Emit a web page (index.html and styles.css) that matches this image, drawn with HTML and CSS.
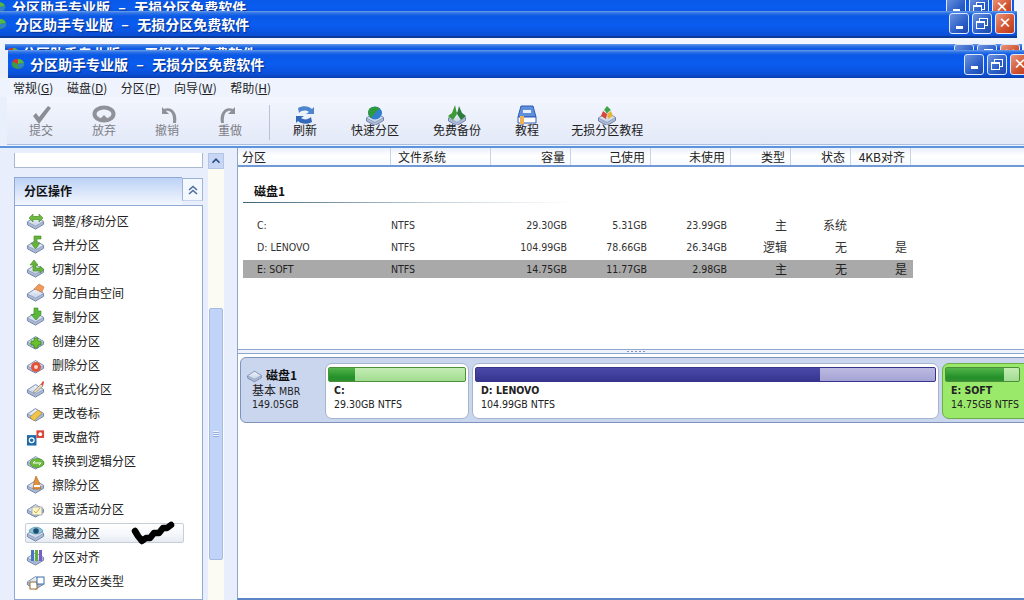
FILE: index.html
```html
<!DOCTYPE html>
<html lang="zh-CN">
<head>
<meta charset="utf-8">
<title>分区助手专业版</title>
<link rel="stylesheet" href="styles.css">
</head>
<body>
<svg class="defs" width="0" height="0" aria-hidden="true">
  <defs>
    <linearGradient id="gd" x1="0" y1="0" x2="0" y2="1"><stop offset="0" stop-color="#f4f7fc"/><stop offset="1" stop-color="#c3cfe4"/></linearGradient>
    <symbol id="disk" viewBox="0 0 20 20">
      <path d="M1.5 11 10 5.500 18.500 10.500V13.500L10 18.500 1.500 14Z" fill="#aebcd6" stroke="#6d80a8"/>
      <path d="M1.500 11 10 5.500 18.500 10.500 10 15.500Z" fill="url(#gd)" stroke="#7c8fb4" stroke-width=".7"/>
    </symbol>
    <symbol id="logo" viewBox="0 0 20 20">
      <ellipse cx="10" cy="10" rx="9" ry="7" fill="#3c9a4a"/>
      <path d="M10 10 2 6.500C4 3 7 3 10 3Z" fill="#d5352c"/>
      <path d="M10 10 10 3C14 3 17 5 18 8Z" fill="#53b648"/>
      <path d="M10 10 18 9C19 13 15 16 11 16Z" fill="#2f7fd8"/>
    </symbol>
  </defs>
</svg>

<div class="win win-a">
  <div class="titlebar">
    <svg class="logo"><use href="#logo"/></svg>
    <span class="title">分区助手专业版 &nbsp;–&nbsp; 无损分区免费软件</span>
    <div class="controls"><span class="ctl min"><i></i></span><span class="ctl res"><i></i></span><span class="ctl cls">✕</span></div>
  </div>
</div>
<div class="win win-b">
  <div class="titlebar">
    <svg class="logo"><use href="#logo"/></svg>
    <span class="title">分区助手专业版 &nbsp;–&nbsp; 无损分区免费软件</span>
    <div class="controls"><span class="ctl min"><i></i></span><span class="ctl res"><i></i></span><span class="ctl cls">✕</span></div>
  </div>
</div>
<div class="win win-c">
  <div class="titlebar">
    <svg class="logo"><use href="#logo"/></svg>
    <span class="title">分区助手专业版 &nbsp;–&nbsp; 无损分区免费软件</span>
    <div class="controls"><span class="ctl min"><i></i></span><span class="ctl res"><i></i></span><span class="ctl cls">✕</span></div>
  </div>
</div>

<div class="win win-main">
  <div class="titlebar">
    <svg class="logo"><use href="#logo"/></svg>
    <span class="title">分区助手专业版 &nbsp;–&nbsp; 无损分区免费软件</span>
    <div class="controls"><span class="ctl min"><i></i></span><span class="ctl res"><i></i></span><span class="ctl cls">✕</span></div>
  </div>

  <nav class="menubar">
    <span>常规(<u>G</u>)</span><span>磁盘(<u>D</u>)</span><span>分区(<u>P</u>)</span><span>向导(<u>W</u>)</span><span>帮助(<u>H</u>)</span>
  </nav>

  <div class="toolbar">
    <div class="tools tools-edit">
      <div class="tool off"><svg viewBox="0 0 24 20"><path d="M4 11 7 8 10 12 19 1 22 3 10 19Z" fill="#8a8e94"/></svg><span>提交</span></div>
      <div class="tool off"><svg viewBox="0 0 24 20"><ellipse cx="12" cy="9" rx="9.500" ry="6.500" fill="none" stroke="#8f9399" stroke-width="4"/><path d="M8 14 12 10 16 14 14 17 12 15 10 17Z" fill="#8f9399"/></svg><span>放弃</span></div>
      <div class="tool off"><svg viewBox="0 0 24 20"><path d="M7 2V9H14L11 6C15 5 19 8 18 18H21C23 8 17 1 9 4Z" fill="#8f9399"/></svg><span>撤销</span></div>
      <div class="tool off"><svg viewBox="0 0 24 20"><path d="M17 2V9H10L13 6C9 5 5 8 6 18H3C1 8 7 1 15 4Z" fill="#8f9399"/></svg><span>重做</span></div>
    </div>
    <div class="tool-sep"></div>
    <div class="tools tools-app">
      <div class="tool"><svg viewBox="0 0 24 20"><path d="M5 3C10 0 16 1 19 4L21 2V9H13L16 7C13 5 9 5 6 8Z" fill="#4d86cf"/><path d="M19 17C14 20 8 19 5 16L3 18V11H11L8 13C11 15 15 15 18 12Z" fill="#3468b8"/></svg><span>刷新</span></div>
      <div class="tool"><svg viewBox="0 0 24 20"><use href="#disk" x="1" y="2" width="22" height="20"/><ellipse cx="12" cy="8" rx="7" ry="6.500" fill="#2f7ed0"/><path d="M6 4C9 1 15 1 17 4 13 5 12 9 8 13 5 11 5 7 6 4Z" fill="#2f9a3a"/></svg><span>快速分区</span></div>
      <div class="tool"><svg viewBox="0 0 24 20"><use href="#disk" x="1" y="2" width="22" height="20"/><path d="M10 0 12 9 8 15 3 11 7 8Z" fill="#3d9a34"/><path d="M14 1 12 9 16 15 21 11 17 8Z" fill="#2a7d3a"/></svg><span>免费备份</span></div>
      <div class="tool"><svg viewBox="0 0 24 20"><path d="M6 1H18L21 12H3Z" fill="#5f8fdd" stroke="#2d5cb3"/><path d="M8 5H16V8H8Z" fill="#eaf1fc"/><path d="M3 12H21V18H3Z" fill="#fff" stroke="#2d5cb3"/><path d="M5 11H9V19H5Z" fill="#f0b057"/></svg><span>教程</span></div>
      <div class="tool"><svg viewBox="0 0 24 20"><use href="#disk" x="1" y="2" width="22" height="20"/><path d="M12 1 16 5 12 8 9 5Z" fill="#3fa34a"/><path d="M8 6 12 9 11 14 6 11Z" fill="#d8453a"/><path d="M16 6 18 11 13 14 12 9Z" fill="#e3b43a"/></svg><span>无损分区教程</span></div>
    </div>
  </div>

  <div class="workspace">
    <aside class="sidebar">
      <div class="side-main">
        <div class="side-box"></div>
        <section class="panel">
          <header class="panel-head">
            <h2>分区操作</h2>
            <span class="collapse"><svg viewBox="0 0 12 12"><path d="M2 6 6 2.500 10 6M2 10 6 6.500 10 10" fill="none" stroke="#4d6f9f" stroke-width="1.600"/></svg></span>
          </header>
          <ul class="ops">
            <li><svg class="ic"><use href="#disk"/><path d="M3 7 7 3V5.500H13V3L17 7 13 11V8.500H7V11Z" fill="#6cbb3c" stroke="#3f8a24" stroke-width=".6"/></svg>调整/移动分区</li>
            <li><svg class="ic"><use href="#disk"/><path d="M8 1H15V4H11V8H14L9.500 14 5 8H8Z" fill="#66b53a" stroke="#3f8a24" stroke-width=".6"/></svg>合并分区</li>
            <li><svg class="ic"><use href="#disk"/><path d="M7 12V6H4L8 1 12 6H10V9H14V7L18 10.500 14 14V12Z" fill="#66b53a" stroke="#3f8a24" stroke-width=".6"/></svg>切割分区</li>
            <li><svg class="ic"><use href="#disk"/><path d="M8 6 13 1 18 4 16 9Z" fill="#ef9a5c" stroke="#c9703a" stroke-width=".6"/></svg>分配自由空间</li>
            <li><svg class="ic"><use href="#disk"/><path d="M8 1H12V4H15V7.500L10 13 5 7.500H8Z" fill="#5cb83a" stroke="#2f8a24" stroke-width=".6"/></svg>复制分区</li>
            <li><svg class="ic"><use href="#disk"/><path d="M8 7H12V10H15V14H12V17H8V14H5V10H8Z" fill="#6cc02e" stroke="#2e7d1e" stroke-width=".7"/></svg>创建分区</li>
            <li><svg class="ic"><use href="#disk"/><circle cx="10" cy="12" r="5" fill="#e0533a"/><circle cx="10" cy="12" r="2" fill="#f7d5c8"/></svg>删除分区</li>
            <li><svg class="ic"><use href="#disk"/><path d="M7 13 15 5 17 7 9 14Z" fill="#e8d9b0" stroke="#7a7a7a" stroke-width=".6"/><path d="M15 5 17 2 18 3 17 7Z" fill="#d8453a"/></svg>格式化分区</li>
            <li><svg class="ic"><use href="#disk"/><path d="M4 14 12 7 16 10 8 18Z" fill="#f0c34a" stroke="#ac8420" stroke-width=".6"/></svg>更改卷标</li>
            <li><svg class="ic" viewBox="0 0 20 20"><rect x="1" y="8" width="10" height="11" fill="#1f6aa8"/><circle cx="6" cy="13.500" r="2.500" fill="none" stroke="#fff" stroke-width="1.300"/><rect x="11" y="3" width="8" height="8" fill="#d8453a"/><circle cx="15" cy="7" r="2" fill="#fff"/></svg>更改盘符</li>
            <li><svg class="ic"><use href="#disk"/><ellipse cx="11" cy="12" rx="7" ry="4.500" fill="#6cbb3c" stroke="#3f8a24" stroke-width=".6"/><path d="M7 12H15M7 12 9 10M15 12 13 14" stroke="#fff" fill="none"/></svg>转换到逻辑分区</li>
            <li><svg class="ic"><use href="#disk"/><path d="M10 1 13 7 15 14H7L8 7Z" fill="#e4913c" stroke="#a36420" stroke-width=".6"/><path d="M8 10H14V12H8Z" fill="#fff"/></svg>擦除分区</li>
            <li><svg class="ic"><use href="#disk"/><rect x="6" y="8" width="10" height="8" fill="#fdf6c8" stroke="#8a93a8" stroke-width=".7"/><path d="M8 12 10 14 14 9" fill="none" stroke="#c9b24a"/></svg>设置活动分区</li>
            <li class="selected"><svg class="ic"><use href="#disk"/><path d="M3 8C6 3 14 3 17 8 14 12 6 12 3 8Z" fill="#8fc3dc" stroke="#3d7f9f" stroke-width=".6"/><circle cx="10" cy="8" r="2.800" fill="#1d4f70"/></svg>隐藏分区</li>
            <li><svg class="ic"><use href="#disk"/><rect x="5" y="3" width="3" height="11" fill="#4d72c4"/><rect x="9" y="3" width="3" height="11" fill="#5cae3e"/><rect x="13" y="3" width="3" height="11" fill="#7a5cc4"/></svg>分区对齐</li>
            <li><svg class="ic"><use href="#disk"/><rect x="4" y="11" width="7" height="7" fill="#fff" stroke="#9a6a2a"/><rect x="11" y="6" width="7" height="7" fill="#fff" stroke="#3d6fa8"/></svg>更改分区类型</li>
            <li><svg class="ic"><use href="#disk"/></svg></li>
          </ul>
          <svg class="scribble" viewBox="0 0 44 24"><path d="M4 10 7 15 11 20 15 17 19 17 23 12 28 12 32 7 36 7 40 4" fill="none" stroke="#000" stroke-width="6.500" stroke-linecap="round" stroke-linejoin="round"/></svg>
        </section>
      </div>
      <div class="scrollbar">
        <span class="scroll-btn"><svg viewBox="0 0 16 16"><path d="M4 10 8 6 12 10" fill="none" stroke="#2b4e82" stroke-width="2"/></svg></span>
        <div class="scroll-thumb"><i></i></div>
      </div>
    </aside>

    <main class="content">
      <div class="table">
        <div class="thead">
          <span class="h-first">分区</span><span class="h-fs">文件系统</span><span class="r">容量</span><span class="r">己使用</span><span class="r">未使用</span><span class="r">类型</span><span class="r">状态</span><span class="r">4KB对齐</span>
        </div>
        <h3 class="disk-title">磁盘1</h3>
        <div class="row">
          <span class="name">C:</span><span>NTFS</span><span class="r">29.30GB</span><span class="r">5.31GB</span><span class="r">23.99GB</span><span class="r zh">主</span><span class="r zh">系统</span><span class="r"></span>
        </div>
        <div class="row">
          <span class="name">D: LENOVO</span><span>NTFS</span><span class="r">104.99GB</span><span class="r">78.66GB</span><span class="r">26.34GB</span><span class="r zh">逻辑</span><span class="r zh">无</span><span class="r zh">是</span>
        </div>
        <div class="row on">
          <span class="name">E: SOFT</span><span>NTFS</span><span class="r">14.75GB</span><span class="r">11.77GB</span><span class="r">2.98GB</span><span class="r zh">主</span><span class="r zh">无</span><span class="r zh">是</span>
        </div>
      </div>
      <div class="splitter"><i></i></div>
      <div class="diskmap">
        <div class="diskcard">
          <div class="diskinfo">
            <div class="diskname"><svg class="ic-small"><use href="#disk"/></svg><b>磁盘1</b></div>
            <div class="diskline"><span class="zh">基本</span> MBR</div>
            <div class="diskline">149.05GB</div>
          </div>
          <div class="part part-c">
            <div class="bar bar-green"><div class="fill" style="width:19%"></div></div>
            <b>C:</b>
            <span>29.30GB NTFS</span>
          </div>
          <div class="part part-d">
            <div class="bar bar-blue"><div class="fill" style="width:75%"></div></div>
            <b>D: LENOVO</b>
            <span>104.99GB NTFS</span>
          </div>
          <div class="part part-e">
            <div class="bar bar-green"><div class="fill" style="width:79%"></div></div>
            <b>E: SOFT</b>
            <span>14.75GB NTFS</span>
          </div>
        </div>
      </div>
    </main>
  </div>
</div>
</body>
</html>
```

FILE: styles.css
```css
* { box-sizing: border-box; }
html, body {
  margin: 0;
  width: 1024px;
  height: 600px;
  overflow: hidden;
  background: #f0f5fe;
  font-family: "Noto Sans CJK SC", "Liberation Sans", sans-serif;
  font-size: 12px;
  color: #222;
}
.defs { position: absolute; }

/* stacked windows on the desktop */
.win { position: absolute; }
.win-a { top: -7px; left: -1px; width: 1015px; }
.win-b { top: 11px; left: 0; width: 1017px; }
.win-c { top: 44px; left: 5px; width: 1017px; }
.win-main { top: 50px; left: 0; width: 1024px; height: 550px; display: flex; flex-direction: column; background: #eaf0fb; }

.titlebar {
  height: 28px;
  display: flex;
  align-items: center;
  background: linear-gradient(#6b9ee8 0, #2f74e6 2px, #0a58e6 5px, #0a5cf0 14px, #0a50d8 24px, #0b3fb0 28px);
}
.win-b .titlebar { height: 27px; border-bottom: 2px solid #0a3a9a; }
.win-c .titlebar { align-items: flex-start; }
.win-main .titlebar { margin-left: 8px; padding-left: 2px; width: 1040px; flex: none; }
.logo { width: 16px; height: 14px; margin-right: 4px; flex: none; }
.win-a .logo { margin-left: -8px; margin-right: 5px; }
.win-b .logo { margin-left: -8px; margin-right: 7px; }
.win-c .logo { margin-right: 1px; margin-top: 2px; }
.title {
  color: #fff;
  font-size: 14px;
  font-weight: 700;
  word-spacing: 1px;
  white-space: nowrap;
  text-shadow: 1px 1px 1px #0a2f86;
}
.win-c .title { line-height: 14px; margin-top: 2px; }
.controls { margin-left: auto; display: flex; gap: 3px; padding-right: 2px; }
.win-main .controls { padding-right: 18px; }
.ctl {
  width: 20px;
  height: 21px;
  border: 1px solid #dfe8fa;
  border-radius: 3px;
  background: linear-gradient(135deg, #6f93dd, #2a5fc8 60%, #1d48a8);
  display: flex;
  align-items: center;
  justify-content: center;
  color: #fff;
  font-size: 15px;
  line-height: 1;
}
.ctl.cls { background: linear-gradient(135deg, #e9967a, #d1512f 60%, #b93a1c); font-family: "DejaVu Sans", sans-serif; }
.ctl.min i { width: 7px; height: 3px; background: #fff; margin-top: 7px; }
.ctl.res i { width: 9px; height: 8px; border: 1px solid #fff; border-top-width: 2px; box-shadow: 3px -3px 0 -1px #2a5fc8, 3px -3px 0 0 #fff; margin: 3px 3px 0 0; }

/* menu and toolbar */
.menubar {
  height: 19px;
  flex: none;
  display: flex;
  align-items: center;
  gap: 13.5px;
  padding-left: 13px;
  background: #eef3fe;
  color: #222;
  line-height: 1;
}
.toolbar {
  height: 48px;
  flex: none;
  display: flex;
  align-items: stretch;
  margin-left: 7px;
  padding-left: 5px;
  background: linear-gradient(#f3f6fe, #e3e9f8);
  border-bottom: 1px solid #a9bee0;
}
.tools { display: flex; }
.tools-edit { gap: 39px; padding-left: 17px; padding-right: 27px; }
.tools-app { gap: 34px; padding-left: 23px; }
.tools-app .tool:last-child { margin-left: -2px; }
.tool { display: flex; flex-direction: column; align-items: center; padding-top: 8px; white-space: nowrap; line-height: 14px; }
.tool svg { width: 24px; height: 20px; margin-bottom: -2px; flex: none; }
.tool.off { color: #7d8087; }
.tool-sep { width: 1px; margin: 8px 0 4px; background: #b9c2d4; }

/* workspace */
.workspace { flex: 1; min-height: 0; display: flex; padding-top: 3px; background: linear-gradient(#eef3fc 1px, #5b94dc 1px, #5b94dc 3px, transparent 3px); }
.sidebar { width: 237px; flex: none; display: flex; padding: 5px 0 0 14px; background: #e8eefb; overflow: hidden; }
.side-main { width: 189px; flex: none; display: flex; flex-direction: column; }
.side-box { height: 15px; flex: none; background: #fff; border: 1px solid #a9b8d2; border-top: 0; }
.panel { flex: 1; margin-top: 9px; position: relative; min-height: 0; display: flex; flex-direction: column; }
.panel-head { height: 28px; flex: none; display: flex; }
.panel-head h2 {
  flex: 1;
  margin: 0;
  padding-left: 9px;
  font-size: 12px;
  line-height: 25px;
  font-weight: 700;
  color: #111;
  background: linear-gradient(#bdd2f6, #f3f7fe);
  border: 1px solid #8fa9d4;
  border-bottom: 0;
  border-right: 0;
}
.collapse {
  width: 21px;
  height: 23px;
  margin-top: 1px;
  display: flex;
  align-items: center;
  justify-content: center;
  background: #f3f7fe;
  border: 1px solid #9db3d8;
  border-bottom-color: #c7d4ea;
}
.collapse svg { width: 12px; height: 12px; }
.ops {
  flex: 1;
  margin: 0;
  list-style: none;
  padding: 3px 0 0 10px;
  background: #fff;
  border: 1px solid #8fa9d4;
  overflow: hidden;
}
.ops li {
  display: flex;
  align-items: center;
  height: 24px;
  width: 159px;
  color: #222;
  white-space: nowrap;
  line-height: 1;
  padding-left: 1px;
}
.ops li.selected {
  height: 20px;
  margin: 2px 0;
  background: linear-gradient(#fff, #f5f7fb 55%, #e6ebf2);
  border: 1px solid #c6ced9;
  border-radius: 2px;
  padding-left: 0;
}
.ic { width: 19px; height: 20px; margin-right: 7px; flex: none; }
.scribble { position: absolute; left: 117px; top: 344px; width: 44px; height: 24px; }

.scrollbar { width: 16px; flex: none; margin-left: 5px; background: #fbfbf3; display: flex; flex-direction: column; }
.scroll-btn { height: 16px; flex: none; background: #c7d6f4; border: 1px solid #eef3fc; outline: 1px solid #b4c6e6; outline-offset: -1px; }
.scroll-btn svg { display: block; width: 14px; height: 14px; }
.scroll-thumb { height: 252px; flex: none; margin: 139px 1px 0; background: #c0d3f9; border: 1px solid #a5bbe3; border-radius: 2px; position: relative; }
.scroll-thumb i { position: absolute; left: 3px; right: 3px; top: 122px; height: 6px; background: repeating-linear-gradient(#eef3fc 0, #eef3fc 1px, #96aedb 1px, #96aedb 2px); }

/* main pane */
.content { flex: 1; min-width: 0; background: #fff; border-left: 1px solid #8ca6d0; border-bottom: 2px solid #5b84c4; display: flex; flex-direction: column; }
.table { height: 201px; flex: none; line-height: 1; }
.thead {
  height: 19px;
  display: grid;
  grid-template-columns: 153px 100px 80px 80px 80px 60px 60px 60px 1fr;
  align-items: center;
  background: linear-gradient(#e9eff9, #fff 45%, #f6f9fd);
  border-bottom: 2px solid #6f9ad6;
}
.thead span { height: 100%; display: flex; align-items: center; padding: 0 4px; border-right: 1px solid #c6d3e8; }
.thead .h-fs { padding-left: 7px; }
.thead .r { justify-content: flex-end; padding-right: 5px; }
.disk-title {
  margin: 15px 0 13px 5px;
  width: 330px;
  height: 21px;
  padding-left: 11px;
  font-size: 12px;
  font-weight: 700;
  color: #111;
  line-height: 18px;
  background: linear-gradient(90deg, #3f6278, #c6d3dd 60%, #fff) left bottom / 100% 1px no-repeat;
}
.row {
  margin: 0 0 4px 5px;
  width: 670px;
  height: 18px;
  display: grid;
  grid-template-columns: 148px 100px 80px 80px 80px 60px 60px 60px;
  align-items: center;
  font-family: "DejaVu Sans Condensed", "Liberation Sans", sans-serif;
  font-size: 10.5px;
  color: #333;
}
.row span { padding-right: 4px; }
.row .name { padding-left: 14px; }
.row .r { text-align: right; }
.row .zh { font: 12px/1 "Noto Sans CJK SC", sans-serif; padding-right: 4px; }
.row.on { background: #a9a9a9; color: #222; }
.splitter { height: 5px; flex: none; border-top: 1px solid #8ca6d0; border-bottom: 1px solid #8ca6d0; background: #eef2fb; display: flex; justify-content: center; align-items: center; }
.splitter i { width: 18px; height: 1px; margin-left: 10px; background: repeating-linear-gradient(90deg, #7d92b6 0, #7d92b6 2px, transparent 2px, transparent 4px); }
.diskmap { padding: 3px 0 0 2px; overflow: hidden; }
.diskcard {
  width: 800px;
  height: 66px;
  display: flex;
  gap: 3px;
  padding-top: 4px;
  background: #cad6ee;
  border: 1px solid #7e93bb;
  border-radius: 6px;
  font-family: "DejaVu Sans Condensed", "Liberation Sans", sans-serif;
  font-size: 10.5px;
  color: #222;
  line-height: 14px;
}
.diskinfo { width: 81px; flex: none; padding: 5px 0 0 11px; white-space: nowrap; }
.diskline { height: 15px; line-height: 15px; }
.diskinfo .zh { font: 12px/15px "Noto Sans CJK SC", sans-serif; }
.diskname { display: flex; align-items: center; margin-left: -6px; font-size: 12px; height: 15px; font-family: "Noto Sans CJK SC", sans-serif; }
.diskname b { margin-left: 3px; font-weight: 700; color: #111; }
.ic-small { width: 17px; height: 16px; flex: none; }
.part { height: 56px; flex: none; margin-top: 1px; padding: 3px 2px 0; background: #fff; border: 1px solid #a7b4ce; border-radius: 7px; display: flex; flex-direction: column; white-space: nowrap; overflow: hidden; }
.part b, .part span { padding-left: 6px; }
.part b { margin-top: 1px; font-weight: 700; color: #222; }
.part-c { width: 144px; }
.part-d { width: 467px; }
.part-e { width: 100px; background: #9be96b; border-color: #6cae47; }
.bar { height: 15px; flex: none; border: 1px solid #4b8f3a; border-radius: 2px; }
.bar .fill { height: 100%; }
.bar-green { background: linear-gradient(#c4ecb4, #a1dc90); }
.bar-green .fill { background: linear-gradient(#52b54a, #25912a 70%, #2d8f2f); }
.bar-blue { background: linear-gradient(#bcb9e2, #a5a3d3); border-color: #34348a; }
.bar-blue .fill { background: linear-gradient(#4c4aa8, #36358f); }
.part-e .bar { width: 75px; }
```
